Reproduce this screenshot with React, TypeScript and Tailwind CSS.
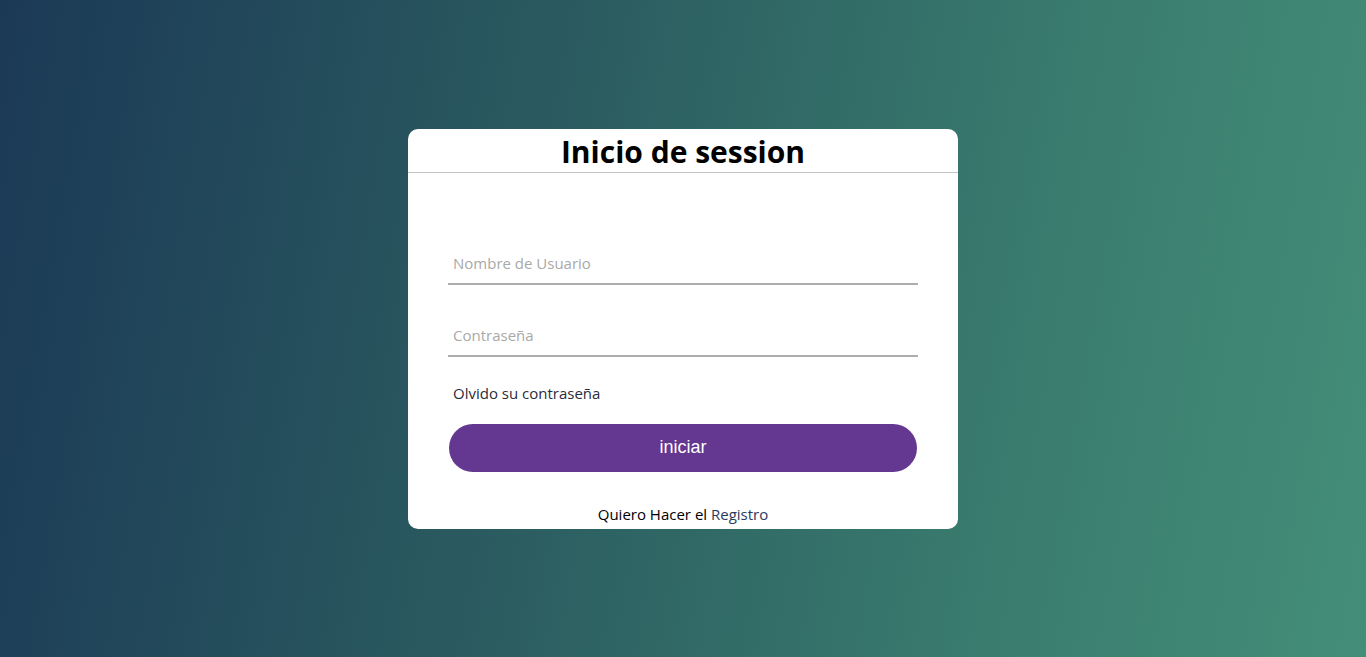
import React from 'react';

const font = { fontFamily: '"Open Sans", "Noto Sans", sans-serif' };

function Field({ placeholder, type }: { placeholder: string; type: string }) {
  return (
    <div className="border-b-2 border-[#adadad]">
      <input
        type={type}
        placeholder={placeholder}
        className="block h-10 w-full bg-transparent px-[5px] text-[15px] text-[#2b2b3b] outline-none placeholder:text-[#a9a9a9]"
        style={font}
      />
    </div>
  );
}

export default function App() {
  return (
    <div className="flex h-[657px] w-full items-center justify-center bg-[linear-gradient(100deg,#1b3956_0%,#2b5c60_40%,#3a7d6f_75%,#448e78_100%)]">
      <div className="h-[400px] w-[550px] overflow-hidden rounded-[10px] bg-white" style={font}>
        {/* Header */}
        <h1 className="h-[44px] border-b border-[#c4c4c4] pt-[3px] text-center text-[30px] font-bold leading-[40px] text-black">
          Inicio de session
        </h1>

        <form className="px-10 pt-[70px]" onSubmit={(e) => e.preventDefault()}>
          <Field placeholder="Nombre de Usuario" type="text" />
          <div className="mt-[30px]">
            <Field placeholder="Contraseña" type="password" />
          </div>

          <div className="mt-[24px] pl-[5px] text-[15px] leading-6 text-[#2b2b3b]">Olvido su contraseña</div>

          <button
            type="submit"
            className="mt-[19px] ml-px block h-12 w-[468px] rounded-full bg-[#643790] text-[18px] font-normal text-white"
            style={{ fontFamily: '"Liberation Sans", Arial, sans-serif' }}
          >
            iniciar
          </button>

          <div className="mt-[30px] text-center text-[15px] leading-6 text-black">
            Quiero Hacer el <span className="text-[#2a3a5c]">Registro</span>
          </div>
        </form>
      </div>
    </div>
  );
}
